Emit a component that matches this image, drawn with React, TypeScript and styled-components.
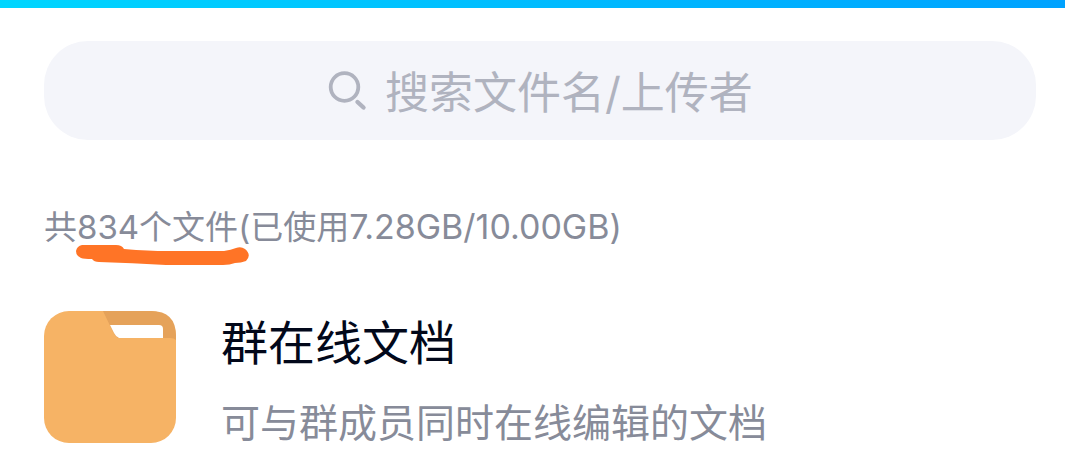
import React from 'react';
import styled, { createGlobalStyle } from 'styled-components';

const GlobalStyle = createGlobalStyle`
  *, *::before, *::after { box-sizing: border-box; }
  body {
    margin: 0;
    background: #fff;
    font-family: Inter, "Noto Sans CJK SC", sans-serif;
  }
`;

const HeaderStrip = styled.div`
  height: 8px;
  background: linear-gradient(90deg, #00d6ff, #00a2ff);
`;

const Page = styled.main`
  padding: 33px 29px 24px 44px;
`;

const SearchBar = styled.label`
  display: flex;
  align-items: center;
  justify-content: center;
  gap: 18px;
  height: 99px;
  border-radius: 44px;
  background: #f4f5fa;
  cursor: text;
`;

const SearchIcon = styled.svg`
  flex: none;
  width: 40px;
  height: 40px;
`;

const SearchInput = styled.input`
  width: 368px;
  min-width: 0;
  padding: 4px 0 0;
  border: 0;
  outline: 0;
  background: transparent;
  color: #02081a;
  font-family: Inter, "Noto Sans CJK SC", sans-serif;
  font-size: 44px;
  line-height: 64px;

  &::placeholder {
    color: #b0b3bf;
    opacity: 1;
  }
`;

const Usage = styled.p`
  margin: 63px 0 0;
  color: #878b99;
  font-size: 33px;
  line-height: 48px;
`;

const Quota = styled.span`
  font-size: 34px;
`;

const Marked = styled.span`
  position: relative;
`;

const MarkerStroke = styled.svg`
  position: absolute;
  left: -3px;
  top: 37px;
  width: 178px;
  height: 24px;
  overflow: visible;
  pointer-events: none;
`;

const FileRow = styled.a`
  display: flex;
  gap: 45px;
  margin-top: 60px;
  color: inherit;
  text-decoration: none;
`;

const FolderIcon = styled.svg`
  flex: none;
  width: 132px;
  height: 132px;
`;

const FileText = styled.div`
  display: flex;
  flex-direction: column;
  gap: 20px;
  min-width: 0;
`;

const FileTitle = styled.h2`
  margin: 0;
  color: #02081a;
  font-size: 47px;
  font-weight: 400;
  line-height: 64px;
`;

const FileNote = styled.p`
  margin: 0;
  color: #878b99;
  font-size: 39px;
  line-height: 56px;
`;

export default function App() {
  return (
    <>
      <GlobalStyle />
      <HeaderStrip />
      <Page>
        <SearchBar>
          <SearchIcon viewBox="0 0 40 40" fill="none" stroke="#b0b3bf" aria-hidden="true">
            <circle cx="17.5" cy="16" r="13.8" strokeWidth="3.8" />
            <path d="M30.5 31l6 5.5" strokeWidth="4.4" strokeLinecap="round" />
          </SearchIcon>
          <SearchInput type="text" placeholder="搜索文件名/上传者" aria-label="搜索文件名/上传者" />
        </SearchBar>

        <Usage>
          共
          <Marked>
            834个文件
            <MarkerStroke viewBox="0 0 178 24" aria-hidden="true">
              <path
                d="M8 1H42Q48 1 50 5Q75 7 93 7H150Q157 6 162 4Q167 2 171 5Q178 11 172 17Q167 19 161 19Q156 21 149 21H92Q58 19 25 18Q20 18 18 15Q10 15 7 14Q2 12 2 7Q3 2 8 1Z"
                fill="#ff7426"
              />
            </MarkerStroke>
          </Marked>
          (已使用<Quota>7.28GB/10.00GB)</Quota>
        </Usage>

        <FileRow href="#docs">
          <FolderIcon viewBox="0 0 132 132" aria-hidden="true">
            <rect width="132" height="132" rx="25" fill="#f6b365" />
            <path d="M59 0H107Q132 0 132 25V29Q130 27 126 27H74Q71 25 69 21Z" fill="#e5a25a" />
            <path d="M66 14H115Q119 14 119 18V27H75Q72 26 70 22Z" fill="#fff" />
          </FolderIcon>
          <FileText>
            <FileTitle>群在线文档</FileTitle>
            <FileNote>可与群成员同时在线编辑的文档</FileNote>
          </FileText>
        </FileRow>
      </Page>
    </>
  );
}
